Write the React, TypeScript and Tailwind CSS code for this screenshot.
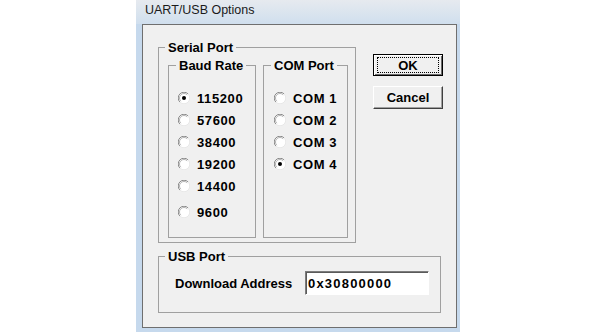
import React from "react";

// ── Classic radio glyph ───────────────────────────────────────────────────────

function Radio({ checked }: { checked?: boolean }) {
  return (
    <svg width="12" height="12" viewBox="0 0 12 12" className="shrink-0">
      <circle cx="6" cy="6" r="5.5" fill="#ffffff" />
      <path d="M1.9 10.1 A5.5 5.5 0 0 1 10.1 1.9" fill="none" stroke="#8a8a8a" strokeWidth="1" />
      <path d="M2.8 9.2 A4.5 4.5 0 0 1 9.2 2.8" fill="none" stroke="#b4b4b4" strokeWidth="1" />
      <path d="M10.1 1.9 A5.5 5.5 0 0 1 1.9 10.1" fill="none" stroke="#e8e8e8" strokeWidth="1" />
      {checked && <circle cx="6" cy="6" r="2" fill="#000000" />}
    </svg>
  );
}

function RadioRow({ label, checked, spaced }: { label: string; checked?: boolean; spaced?: boolean }) {
  return (
    <div className={`flex items-center gap-[7px] h-[22px] ${spaced ? "mt-[4px]" : ""}`}>
      <Radio checked={checked} />
      <span className="text-[13px] font-bold leading-[15px] tracking-[0.6px]">{label}</span>
    </div>
  );
}

// ── Group box ────────────────────────────────────────────────────────────────

function Legend({ children, inset }: { children: React.ReactNode; inset: string }) {
  return (
    <legend className={`${inset} px-[3px] text-[13px] font-bold leading-[15px]`}>{children}</legend>
  );
}

const BAUD = ["115200", "57600", "38400", "19200", "14400", "9600"];
const COMS = ["COM 1", "COM 2", "COM 3", "COM 4"];

export default function App() {
  return (
    <div className="w-[600px] h-[332px] bg-white pl-[136px] font-['Liberation_Sans',Arial,sans-serif] text-black">
      {/* Window frame */}
      <div className="w-[324px] h-[332px] flex flex-col bg-[#c6d9ed]">
        {/* Title bar */}
        <div className="h-[24px] flex items-start pt-[2px] pl-[9px] bg-gradient-to-b from-[#e6eaef] to-[#d0dfee]">
          <span className="text-[12.5px] leading-[16px] text-[#1a1a1a]">UART/USB Options</span>
        </div>

        {/* Client area */}
        <div className="ml-[6px] w-[315px] h-[304px] border border-[#6f6f6f] bg-[#f0f0f0] flex flex-col">
          <div className="flex items-start mt-[15px] pl-[15px]">
            {/* Serial Port */}
            <fieldset className="w-[198px] h-[203px] border border-[#a0a0a0] p-0 m-0">
              <Legend inset="ml-[6px]">Serial Port</Legend>
              <div className="flex mt-[3px] pl-[9px] gap-[7px]">
                <fieldset className="w-[88px] h-[180px] border border-[#a0a0a0] p-0 m-0">
                  <Legend inset="ml-[7px]">Baud Rate</Legend>
                  <div className="flex flex-col pt-[14px] pl-[9px]">
                    {BAUD.map((b, i) => (
                      <RadioRow key={b} label={b} checked={i === 0} spaced={i === 5} />
                    ))}
                  </div>
                </fieldset>
                <fieldset className="w-[85px] h-[180px] border border-[#a0a0a0] p-0 m-0">
                  <Legend inset="ml-[7px]">COM Port</Legend>
                  <div className="flex flex-col pt-[14px] pl-[10px]">
                    {COMS.map((c, i) => (
                      <RadioRow key={c} label={c} checked={i === 3} />
                    ))}
                  </div>
                </fieldset>
              </div>
            </fieldset>

            {/* Buttons */}
            <div className="flex flex-col ml-[17px] pt-[14px] gap-[10px]">
              <button className="w-[70px] h-[22px] border border-black bg-[#f0f0f0] p-0 shadow-[inset_1px_1px_0_#ffffff,inset_-1px_-1px_0_#6a6a6a]">
                <div className="mx-[3px] h-[16px] border border-dotted border-black flex items-center justify-center text-[13px] font-bold leading-[15px]">
                  OK
                </div>
              </button>
              <button className="w-[70px] h-[23px] bg-[#f0f0f0] border border-t-white border-l-white border-r-[#404040] border-b-[#404040] shadow-[inset_-1px_-1px_0_#a0a0a0] flex items-center justify-center text-[13px] font-bold leading-[15px]">
                Cancel
              </button>
            </div>
          </div>

          {/* USB Port */}
          <fieldset className="ml-[15px] mt-[6px] w-[283px] h-[64px] border border-[#a0a0a0] p-0 m-0">
            <Legend inset="ml-[6px]">USB Port</Legend>
            <div className="flex items-center mt-[7px] pl-[16px]">
              <span className="w-[130px] text-[13px] font-bold leading-[15px]">Download Address</span>
              <div className="w-[124px] h-[24px] bg-white border border-t-[#7c7c7c] border-l-[#7c7c7c] border-r-white border-b-white shadow-[inset_1px_1px_0_#5a5a5a] flex items-center pl-[2px]">
                <span className="text-[13px] font-bold leading-[15px] tracking-[1.2px]">0x30800000</span>
              </div>
            </div>
          </fieldset>
        </div>
      </div>
    </div>
  );
}
